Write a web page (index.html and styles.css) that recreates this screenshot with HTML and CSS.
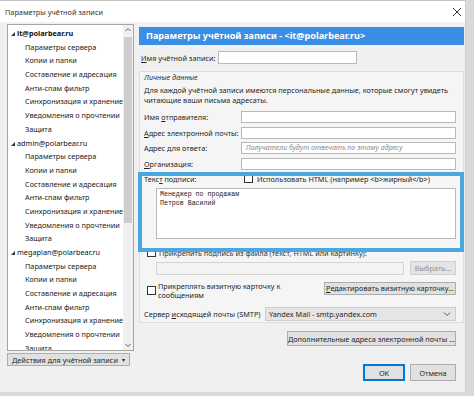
FILE: index.html
```html
<!DOCTYPE html>
<html lang="ru">
<head>
<meta charset="utf-8">
<link rel="stylesheet" href="styles.css">
</head>
<body>
<div class="window">
  <div class="titlebar">
    <span class="title">Параметры учётной записи</span>
    <svg class="close" width="10" height="10" viewBox="0 0 10 10"><path d="M1 1L9 9M9 1L1 9" stroke="#333" stroke-width="1" fill="none"/></svg>
  </div>
  <div class="body">
    <div class="left">
      <div class="tree">
        <div class="tree-list">
          <div class="node root"><span class="tri"></span>it@polarbear.ru</div>
          <div class="node">Параметры сервера</div>
          <div class="node">Копии и папки</div>
          <div class="node">Составление и адресация</div>
          <div class="node">Анти-спам фильтр</div>
          <div class="node">Синхронизация и хранение</div>
          <div class="node">Уведомления о прочтении</div>
          <div class="node">Защита</div>
          <div class="node root normal"><span class="tri"></span>admin@polarbear.ru</div>
          <div class="node">Параметры сервера</div>
          <div class="node">Копии и папки</div>
          <div class="node">Составление и адресация</div>
          <div class="node">Анти-спам фильтр</div>
          <div class="node">Синхронизация и хранение</div>
          <div class="node">Уведомления о прочтении</div>
          <div class="node">Защита</div>
          <div class="node root normal"><span class="tri"></span>megaplan@polarbear.ru</div>
          <div class="node">Параметры сервера</div>
          <div class="node">Копии и папки</div>
          <div class="node">Составление и адресация</div>
          <div class="node">Анти-спам фильтр</div>
          <div class="node">Синхронизация и хранение</div>
          <div class="node">Уведомления о прочтении</div>
          <div class="node">Защита</div>
        </div>
        <div class="scrollbar">
          <svg class="arrow" width="10" height="10" viewBox="0 0 10 10"><path d="M2.5 6L5 3.5L7.5 6" stroke="#606060" fill="none"/></svg>
          <div class="track"><div class="thumb"></div></div>
          <svg class="arrow" width="10" height="10" viewBox="0 0 10 10"><path d="M2.5 4L5 6.5L7.5 4" stroke="#606060" fill="none"/></svg>
        </div>
      </div>
      <div class="btn actions">Действия для учётной записи <span class="caret">▾</span></div>
    </div>
    <div class="right">
      <div class="header">Параметры учётной записи - &lt;it@polarbear.ru&gt;</div>
      <div class="acc-row">
        <span class="lbl"><u>И</u>мя учётной записи:</span>
        <div class="field acc-field"></div>
      </div>
      <div class="group">
        <div class="legend">Личные данные</div>
        <div class="desc">Для каждой учётной записи имеются персональные данные, которые смогут увидеть<br>читающие ваши письма адресаты.</div>
        <div class="fields">
          <div class="frow"><span class="flabel">Имя <u>о</u>тправителя:</span><div class="field"></div></div>
          <div class="frow"><span class="flabel"><u>А</u>дрес электронной почты:</span><div class="field"></div></div>
          <div class="frow"><span class="flabel">Адрес для ответа:</span><div class="field placeholder">Получатели будут отвечать по этому адресу</div></div>
          <div class="frow"><span class="flabel"><u>О</u>рганизация:</span><div class="field"></div></div>
        </div>
        <div class="sig">
          <div class="sig-top">
            <span class="sig-label">Текс<u>т</u> подписи:</span>
            <span class="cb"></span>
            <span class="sig-html">Использовать HTML (например &lt;b&gt;жирный&lt;/b&gt;)</span>
          </div>
          <div class="sig-text">Менеджер по продажам
Петров Василий</div>
          <div class="highlight"></div>
        </div>
        <div class="attach">
          <span class="cb"></span>
          <span>Прикрепить подпись из файла (текст, HTML или картинку):</span>
        </div>
        <div class="file-row">
          <div class="field disabled"></div>
          <div class="btn choose">Выбрать...</div>
        </div>
        <div class="card-row">
          <span class="cb"></span>
          <span class="card-text">Прикреплять визитную карточку к<br>сообщениям</span>
          <div class="btn card-btn"><u>Р</u>едактировать визитную карточку...</div>
        </div>
        <div class="smtp-row">
          <span class="smtp-label">Сервер <u>и</u>сходящей почты (SMTP)</span>
          <div class="select">Yandex Mail - smtp.yandex.com
            <svg width="8" height="6" viewBox="0 0 8 6"><path d="M1 1.5L4 4.5L7 1.5" stroke="#555" fill="none"/></svg>
          </div>
        </div>
      </div>
      <div class="more-row"><div class="btn more">Дополнительные адреса электронной почты ...</div></div>
      <div class="footer">
        <div class="btn ok">OK</div>
        <div class="btn cancel">Отмена</div>
      </div>
    </div>
  </div>
</div>
</body>
</html>
```
FILE: styles.css
```css
* { box-sizing: border-box; }
html, body { margin: 0; padding: 0; }
body {
  width: 474px;
  height: 396px;
  overflow: hidden;
  background: #d9d9d9;
  font-family: "Noto Sans", "Open Sans", sans-serif;
  font-size: 7.3px;
  color: #1f1f1f;
}
u { text-decoration: underline; text-underline-offset: 1px; }
.window {
  width: 466px;
  height: 392px;
  background: #f0f0f0;
  border-right: 1px solid #cfcfcf;
  display: flex;
  flex-direction: column;
}
.titlebar {
  height: 22px;
  background: #fff;
  border-top: 1px solid #c4c4c4;
  display: flex;
  align-items: center;
  justify-content: space-between;
  padding: 0 3px 0 5px;
  flex: none;
}
.title { color: #333; }
.body {
  flex: 1;
  display: flex;
  gap: 5px;
  padding: 2px 0 0 7px;
}
.left { width: 127px; display: flex; flex-direction: column; }
.tree {
  height: 327px;
  background: #fff;
  border: 1px solid #a5a5a5;
  display: flex;
  overflow: hidden;
}
.tree-list { flex: 1; padding-top: 2px; overflow: hidden; }
.node {
  height: 13.7px;
  line-height: 13.7px;
  padding-left: 17px;
  white-space: nowrap;
  color: #222;
}
.node.root { padding-left: 3px; font-weight: bold; color: #111; }
.node.root.normal { font-weight: normal; }
.tri {
  display: inline-block;
  width: 0; height: 0;
  border-left: 4px solid transparent;
  border-bottom: 4px solid #333;
  margin-right: 2px;
  vertical-align: 0px;
}
.scrollbar {
  width: 10px;
  display: flex;
  flex-direction: column;
  background: #f0f0f0;
}
.arrow { flex: none; }
.track { flex: 1; padding: 2px 1px; }
.thumb { width: 8px; height: 186px; background: #cdcdcd; }
.btn {
  background: #e1e1e1;
  border: 1px solid #adadad;
  display: flex;
  align-items: center;
  justify-content: center;
  white-space: nowrap;
  color: #1f1f1f;
}
.actions {
  margin-top: 2px;
  height: 13px;
  width: 123px;
}
.caret { margin-left: 4px; font-size: 6px; }
.right { width: 325px; margin-top: 3px; display: flex; flex-direction: column; }
.header {
  height: 18px;
  background: #3a8ee6;
  color: #fff;
  font-weight: bold;
  font-size: 9.1px;
  line-height: 18px;
  padding-left: 7px;
  white-space: nowrap;
}
.acc-row {
  margin-top: 6px;
  height: 13px;
  display: flex;
  align-items: center;
  padding-left: 2px;
}
.acc-row .lbl { width: 77px; }
.field {
  height: 12px;
  background: #fff;
  border: 1px solid #b9b9b9;
}
.acc-field { width: 139px; height: 13px; }
.group {
  margin-top: 7px;
  background: #f5f5f5;
  border: 1px solid #dedede;
  height: 252px;
  padding: 0 7px 0 3px;
}
.legend { font-style: italic; line-height: 10px; height: 10px; padding-left: 1px; color: #333; }
.desc { line-height: 10px; margin-top: 3px; padding-left: 1px; }
.fields { margin-top: 6px; display: flex; flex-direction: column; gap: 3.6px; }
.frow { display: flex; align-items: center; height: 12px; }
.flabel { width: 98px; padding-left: 1px; white-space: nowrap; }
.frow .field { flex: 1; }
.placeholder {
  font-style: italic;
  color: #8a8a8a;
  font-size: 7px;
  line-height: 10px;
  padding-left: 4px;
}
.sig { position: relative; margin-top: 3px; height: 74px; }
.sig-top { display: flex; align-items: center; height: 10px; margin-top: 4px; padding-left: 1px; }
.sig-label { width: 100px; }
.cb {
  width: 9px;
  height: 9px;
  border: 1px solid #333;
  background: #fff;
  flex: none;
}
.sig-html { margin-left: 4px; }
.sig-text {
  margin: 4px 0 0 13px;
  height: 51px;
  background: #fff;
  border: 1px solid #b9b9b9;
  font-family: "Liberation Mono", "DejaVu Sans Mono", monospace;
  font-size: 6.6px;
  line-height: 9px;
  padding: 1px 3px;
  white-space: pre;
  color: #222;
}
.highlight {
  position: absolute;
  left: -5px;
  right: -8px;
  top: -2px;
  bottom: -4px;
  border: 4px solid #4ba7e0;
}
.attach {
  display: flex;
  align-items: center;
  gap: 3px;
  height: 10px;
  padding-left: 4px;
  color: #333;
  white-space: nowrap;
}
.file-row { display: flex; gap: 6px; margin: 4px 0 0 13px; height: 13px; }
.file-row .field { flex: 1; height: 13px; background: #f3f3f3; border-color: #d5d5d5; }
.choose { width: 46px; height: 14px; margin-top: -1px; color: #8f8f8f; background: #e4e4e4; border-color: #d0d0d0; }
.card-row { display: flex; align-items: flex-start; margin-top: 7px; padding-left: 4px; height: 16px; }
.card-row .cb { margin-top: 4px; }
.card-text { margin-left: 2px; line-height: 9px; flex: 1; }
.card-btn { width: 132px; height: 13px; }
.smtp-row { display: flex; align-items: center; margin-top: 9px; height: 14px; padding-left: 1px; }
.smtp-label { width: 121px; white-space: nowrap; }
.select {
  flex: 1;
  height: 14px;
  background: #e5e5e5;
  border: 1px solid #cccccc;
  display: flex;
  align-items: center;
  justify-content: space-between;
  padding: 0 4px 0 3px;
}
.more-row { display: flex; justify-content: flex-end; margin-top: 8px; padding-right: 8px; }
.more { width: 169px; height: 15px; }
.footer { display: flex; justify-content: flex-end; gap: 5px; margin-top: 18px; padding-right: 8px; }
.ok { width: 42px; height: 17px; border: 1px solid #0078d7; box-shadow: inset 0 0 0 1px #0078d7; }
.cancel { width: 46px; height: 17px; }
```
